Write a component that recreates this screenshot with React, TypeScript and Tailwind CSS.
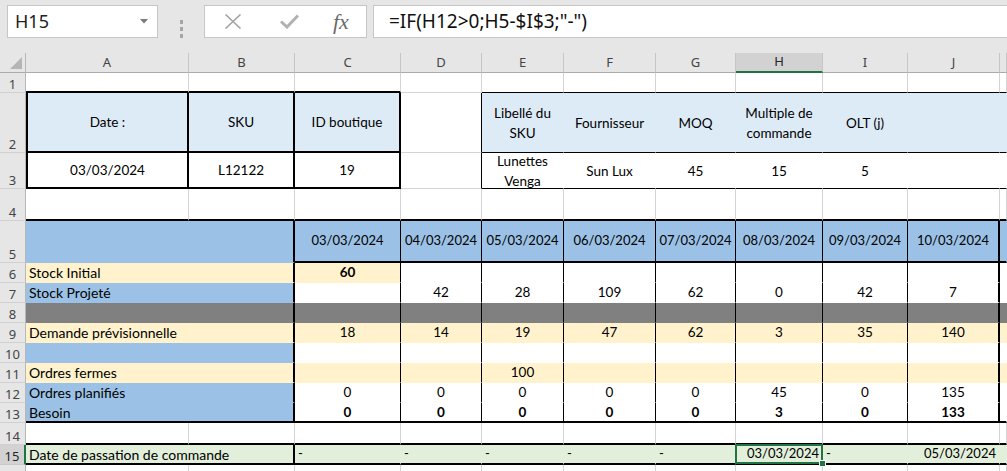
import React from 'react'

const YEL = 'bg-[#fff2cc]'
const BLU = 'bg-[#9bc2e6]'
const LBL = 'bg-[#ddebf7]'
const GRY = 'bg-[#808080]'
const GRN = 'bg-[#e2efda]'
const WHT = 'bg-white'

// right borders
const rG = 'border-r border-r-[#d4d4d4]'
const rN = 'border-r border-r-transparent'
const r1 = 'border-r border-r-black'
const r2 = 'border-r-2 border-r-black'
// bottom borders
const bG = 'border-b border-b-[#d4d4d4]'
const bN = 'border-b border-b-transparent'
const b1 = 'border-b border-b-black'
const b2 = 'border-b-2 border-b-black'

const letters = ['A', 'B', 'C', 'D', 'E', 'F', 'G', 'H', 'I', 'J', '']
const dates = ['03/03/2024', '04/03/2024', '05/03/2024', '06/03/2024', '07/03/2024', '08/03/2024', '09/03/2024', '10/03/2024']

interface BodyRow {
  n: number
  label: string
  labelBg: string
  bg: string[]
  kBg: string
  vals: string[]
  bold?: boolean
}

const body: BodyRow[] = [
  { n: 6, label: 'Stock Initial', labelBg: YEL, bg: [YEL, WHT, WHT, WHT, WHT, WHT, WHT, WHT], kBg: WHT, vals: ['60', '', '', '', '', '', '', ''], bold: true },
  { n: 7, label: 'Stock Projeté', labelBg: BLU, bg: Array(8).fill(WHT), kBg: WHT, vals: ['', '42', '28', '109', '62', '0', '42', '7'] },
  { n: 8, label: '', labelBg: GRY, bg: Array(8).fill(GRY), kBg: GRY, vals: Array(8).fill('') },
  { n: 9, label: 'Demande prévisionnelle', labelBg: YEL, bg: Array(8).fill(YEL), kBg: YEL, vals: ['18', '14', '19', '47', '62', '3', '35', '140'] },
  { n: 10, label: '', labelBg: BLU, bg: Array(8).fill(WHT), kBg: WHT, vals: Array(8).fill('') },
  { n: 11, label: 'Ordres fermes', labelBg: YEL, bg: Array(8).fill(YEL), kBg: YEL, vals: ['', '', '100', '', '', '', '', ''] },
  { n: 12, label: 'Ordres planifiés', labelBg: BLU, bg: Array(8).fill(WHT), kBg: WHT, vals: ['0', '0', '0', '0', '0', '45', '0', '135'] },
  { n: 13, label: 'Besoin', labelBg: BLU, bg: Array(8).fill(WHT), kBg: WHT, vals: ['0', '0', '0', '0', '0', '3', '0', '133'], bold: true },
]

function Cell({ cls, children, wrap }: { cls: string; children?: React.ReactNode; wrap?: boolean }) {
  return (
    <div
      className={`flex items-center overflow-hidden text-black ${wrap ? 'whitespace-normal text-center leading-[20px]' : 'whitespace-nowrap'} ${cls}`}
    >
      {children}
    </div>
  )
}

function RowHead({ n, selected }: { n?: number; selected?: boolean }) {
  return (
    <div
      className={`flex items-end justify-center pb-[1px] font-['Noto_Sans',sans-serif] text-[13px] leading-none ${
        selected
          ? 'bg-[#d2d2d2] border-r-2 border-r-[#217346] border-b border-b-[#c8c8c8] text-[#262626]'
          : 'bg-[#e6e6e6] border-r border-r-[#b7b7b7] border-b border-b-[#d0d0d0] text-[#444]'
      }`}
    >
      {n}
    </div>
  )
}

function FormulaBar() {
  return (
    <div className="flex h-[53px] bg-[#e6e6e6] pt-[5px]">
      <div className="ml-[7px] flex h-[33px] w-[151px] items-center justify-between border border-[#c6c6c6] bg-white pl-[7px] pr-[9px] font-['Noto_Sans',sans-serif] text-[18px] text-[#222]">
        <span>H15</span>
        <svg width="8" height="5" viewBox="0 0 8 5">
          <path d="M0 0 L8 0 L4 4.5 Z" fill="#7a7a7a" />
        </svg>
      </div>
      <div className="flex w-[46px] flex-col items-center justify-center gap-[3px]">
        <div className="h-[4px] w-[3px] bg-[#a6a6a6]" />
        <div className="h-[4px] w-[3px] bg-[#a6a6a6]" />
        <div className="h-[4px] w-[3px] bg-[#a6a6a6]" />
      </div>
      <div className="flex h-[33px] w-[163px] items-center border border-[#c6c6c6] bg-white">
        <svg className="ml-[19px]" width="18" height="15" viewBox="0 0 18 15">
          <path d="M1.5 0.5 L16.5 14.5 M16.5 0.5 L1.5 14.5" stroke="#a3a3a3" strokeWidth="1.6" fill="none" />
        </svg>
        <svg className="ml-[38px]" width="19" height="15" viewBox="0 0 19 15">
          <path d="M1 7.5 L7 13 L18 1.5" stroke="#b1b1b1" strokeWidth="3" fill="none" />
        </svg>
        <span className="ml-[34px] font-['Liberation_Serif',serif] text-[22px] italic leading-none text-[#6a6a6a]">fx</span>
      </div>
      <div className="ml-[6px] flex h-[33px] flex-1 items-center border border-r-0 border-[#c6c6c6] bg-white pl-[15px] font-['Noto_Sans',sans-serif] text-[19px] text-[#111]">
        =IF(H12&gt;0;H5-$I$3;"-")
      </div>
    </div>
  )
}

export default function App() {
  const cells: React.ReactNode[] = []

  // column header row
  cells.push(
    <div key="corner" className="flex items-end justify-end border-r border-r-[#b7b7b7] border-b border-b-[#ababab] bg-[#e6e6e6] pb-[3px] pr-[3px]">
      <svg width="12" height="12" viewBox="0 0 12 12">
        <path d="M12 0 L12 12 L0 12 Z" fill="#b5b5b5" />
      </svg>
    </div>
  )
  letters.forEach((l, i) =>
    cells.push(
      <div
        key={`h${i}`}
        className={`flex items-center justify-center font-['Noto_Sans',sans-serif] text-[13px] ${
          l === 'H'
            ? 'bg-[#d2d2d2] border-b-2 border-b-[#217346] border-r border-r-[#c6c6c6] text-[#262626]'
            : 'bg-[#e6e6e6] border-b border-b-[#ababab] border-r border-r-[#c6c6c6] text-[#444]'
        }`}
      >
        {l}
      </div>
    )
  )

  // row 1
  cells.push(<RowHead key="rh1" n={1} />)
  for (let c = 0; c < 11; c++) {
    const bb = c < 3 ? b2 : c === 3 ? bG : b1
    cells.push(<Cell key={`1-${c}`} cls={`${rG} ${bb}`} />)
  }

  // rows 2 and 3
  const top2 = ['Date :', 'SKU', 'ID boutique']
  const top3 = ['03/03/2024', 'L12122', '19']
  const side2 = ['Libellé du SKU', 'Fournisseur', 'MOQ', 'Multiple de commande', 'OLT (j)', '', '']
  const side3 = ['Lunettes Venga', 'Sun Lux', '45', '15', '5', '', '']
  ;[2, 3].forEach((r) => {
    const top = r === 2 ? top2 : top3
    const side = r === 2 ? side2 : side3
    const fill = r === 2 ? LBL : WHT
    cells.push(<RowHead key={`rh${r}`} n={r} />)
    top.forEach((t, i) =>
      cells.push(
        <Cell
          key={`${r}-t${i}`}
          cls={`${fill} ${r2} ${b2} justify-center text-[13.5px] ${i === 0 ? 'border-l-2 border-l-black' : ''}`}
        >
          {t}
        </Cell>
      )
    )
    cells.push(<Cell key={`${r}-d`} cls={`${r1} ${bG}`} />)
    side.forEach((t, i) =>
      cells.push(
        <Cell key={`${r}-s${i}`} wrap cls={`${fill} ${rN} ${b1} justify-center px-[2px] text-[13.5px]`}>
          {t}
        </Cell>
      )
    )
  })

  // row 4
  cells.push(<RowHead key="rh4" n={4} />)
  for (let c = 0; c < 11; c++) cells.push(<Cell key={`4-${c}`} cls={`${rG} ${b2}`} />)

  // row 5
  cells.push(<RowHead key="rh5" n={5} />)
  cells.push(<Cell key="5-ab" cls={`col-span-2 ${BLU} ${r2} ${bN}`} />)
  dates.forEach((d, i) =>
    cells.push(
      <Cell key={`5-${i}`} cls={`${BLU} ${i === 7 ? r2 : r1} ${b2} justify-center text-[13px]`}>
        {d}
      </Cell>
    )
  )
  cells.push(<Cell key="5-k" cls={`${BLU} ${rN} ${b2}`} />)

  // rows 6 - 13
  body.forEach((row) => {
    const bb = row.n === 13 ? b2 : bN
    cells.push(<RowHead key={`rh${row.n}`} n={row.n} />)
    cells.push(
      <Cell key={`${row.n}-ab`} cls={`col-span-2 ${row.labelBg} ${r2} ${bb} pl-[3px] text-[14px]`}>
        {row.label}
      </Cell>
    )
    row.vals.forEach((v, i) =>
      cells.push(
        <Cell
          key={`${row.n}-${i}`}
          cls={`${row.bg[i]} ${i === 7 ? r2 : r1} ${bb} justify-center text-[13.5px] ${row.bold ? 'font-bold' : ''}`}
        >
          {v}
        </Cell>
      )
    )
    cells.push(<Cell key={`${row.n}-k`} cls={`${row.kBg} ${rN} ${bb}`} />)
  })

  // row 14
  cells.push(<RowHead key="rh14" n={14} />)
  for (let c = 0; c < 11; c++) cells.push(<Cell key={`14-${c}`} cls={`${rG} ${b2}`} />)

  // row 15
  cells.push(<RowHead key="rh15" n={15} selected />)
  cells.push(
    <Cell key="15-ab" cls={`col-span-2 ${GRN} ${r2} ${b2} pl-[3px] text-[14px]`}>
      Date de passation de commande
    </Cell>
  )
  const r15 = ['-', '-', '-', '-', '-', '03/03/2024', '-', '05/03/2024']
  r15.forEach((v, i) => {
    const right = v !== '-'
    cells.push(
      <Cell
        key={`15-${i}`}
        cls={`${GRN} ${rN} ${b2} text-[13px] ${right ? 'justify-end pr-[3px]' : 'pl-[3px]'} ${i === 5 ? 'relative overflow-visible' : ''}`}
      >
        {v}
        {i === 5 && (
          <>
            <div className="absolute -bottom-[1px] -left-[1px] -right-[1px] -top-[1px] z-10 border-2 border-[#217346]" />
            <div className="absolute -bottom-[4px] -right-[4px] z-20 h-[7px] w-[7px] border border-white bg-[#217346]" />
          </>
        )}
      </Cell>
    )
  })
  cells.push(<Cell key="15-k" cls={`${GRN} ${rN} ${b2}`} />)

  // row 16 (only its top edge is visible)
  cells.push(<RowHead key="rh16" />)
  for (let c = 0; c < 11; c++) cells.push(<Cell key={`16-${c}`} cls={`${rG} ${bG}`} />)

  return (
    <div className="h-[471px] w-[1007px] overflow-hidden bg-white font-['Lato',sans-serif]">
      <FormulaBar />
      <div className="grid grid-cols-[26px_163px_106px_106px_81px_82px_92px_80px_87px_85px_92px_1fr] grid-rows-[20px_20px_60px_36px_32px_42px_20px_20px_20px_20px_20px_20px_20px_20px_22px_20px_20px]">
        {cells}
      </div>
    </div>
  )
}
